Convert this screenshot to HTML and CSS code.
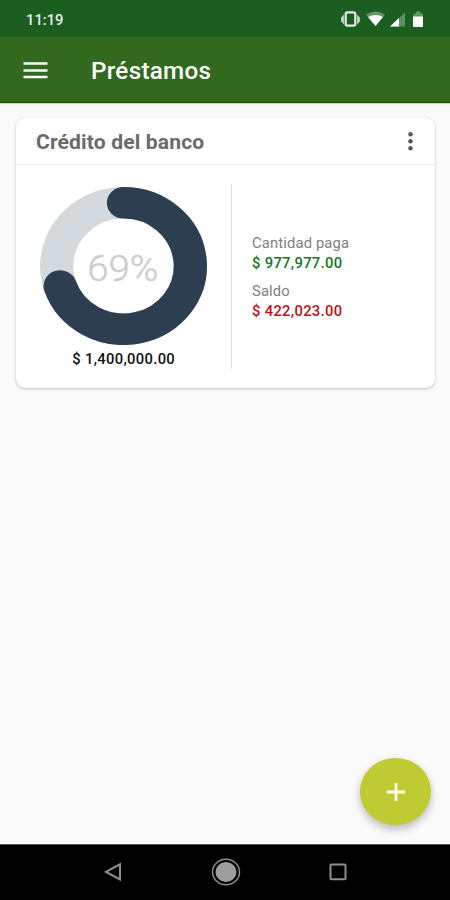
FILE: index.html
```html
<!DOCTYPE html>
<html lang="es">
<head>
<meta charset="utf-8">
<title>Préstamos</title>
<link rel="stylesheet" href="styles.css">
</head>
<body>
<div class="screen">
  <header class="status">
    <span class="clock wide">11:19</span>
    <svg class="status-icons" viewBox="0 0 86 20" width="86" height="20">
      <path d="M4 4.500L1 7.500v4l3 3zM17 4.500L20 7.500v4l-3 3z" fill="#b5cfb5"/>
      <rect x="5.700" y="2.400" width="9.600" height="13.200" rx="1.600" fill="none" stroke="#e4eee4" stroke-width="2.200"/>
      <path d="M26 4.700Q35.500-1.700 45 4.700L35.500 16z" fill="#639665"/>
      <path d="M28 7Q35.500 3 43 7L35.500 16z" fill="#fff"/>
      <path d="M50 16.500L65 2.500v14z" fill="#5b905d"/>
      <path d="M50 16.500L59 8v8.500z" fill="#fff"/>
      <path d="M73.500 7.500V4.500q0-1 1-1h1.500V1.500h4.500v2h1.500q1 0 1 1v3z" fill="#639665"/>
      <path d="M73 6.500h10v9.500q0 1-1 1h-8q-1 0-1-1z" fill="#fff"/>
    </svg>
  </header>
  <nav class="appbar">
    <svg class="burger" viewBox="0 0 25 18" width="25" height="18"><path d="M.5 1.500h24M.5 8.500h24M.5 15h24" stroke="#f8fbf6" stroke-width="2.700"/></svg>
    <h1 class="title wide">Préstamos</h1>
  </nav>
  <main class="content">
    <section class="card">
      <div class="card-head">
        <h2 class="card-title wide">Crédito del banco</h2>
        <svg viewBox="0 0 6 20" width="6" height="20" fill="#555"><circle cx="3.500" cy="3.300" r="2.200"/><circle cx="3.500" cy="10.300" r="2.200"/><circle cx="3.500" cy="17.300" r="2.200"/></svg>
      </div>
      <div class="card-body">
        <div class="chart">
          <svg class="donut" viewBox="0 0 158 158" preserveAspectRatio="none" fill="none" stroke-width="31.500">
            <circle cx="79" cy="79" r="63.200" stroke="#d4d9dd"/>
            <path d="M79 15.800A63.200 63.200 0 1 1 19.070 99.050" stroke="#2c3e50" stroke-linecap="round"/>
          </svg>
          <span class="percent wide">69%</span>
          <span class="total wide">$ 1,400,000.00</span>
        </div>
        <dl class="figures">
          <dt class="wide">Cantidad paga</dt>
          <dd class="paid wide">$ 977,977.00</dd>
          <dt class="wide">Saldo</dt>
          <dd class="due wide">$ 422,023.00</dd>
        </dl>
      </div>
    </section>
    <button class="fab" aria-label="Agregar"><svg viewBox="0 0 18 18" width="18" height="18"><path d="M0 9h18M9 0v18" stroke="#fffff0" stroke-width="2.800"/></svg></button>
  </main>
  <footer class="navbar">
    <svg viewBox="0 0 18 20" width="18" height="20"><path d="M16 2.300v15.200L1.900 9.900z" fill="none" stroke="#8e8e8e" stroke-width="2"/></svg>
    <svg viewBox="0 0 30 28" width="30" height="28"><ellipse cx="15" cy="14" rx="13.500" ry="12.800" fill="none" stroke="#8e8e8e" stroke-width="1.500"/><ellipse cx="15" cy="14" rx="10.500" ry="10" fill="#9e9e9e"/></svg>
    <svg viewBox="0 0 18 18" width="18" height="18"><rect x="1.500" y="1.500" width="15" height="14.800" rx=".8" fill="none" stroke="#8e8e8e" stroke-width="2"/></svg>
  </footer>
</div>
</body>
</html>
```
FILE: styles.css
```css
* { box-sizing: border-box; }
body { margin: 0; font-family: Roboto, "Liberation Sans", sans-serif; }
h1, h2, dl, dd { margin: 0; }
.screen { width: 450px; height: 900px; display: flex; flex-direction: column; background: #fafafa; overflow: hidden; }
.wide { display: block; transform: scaleX(1.055); transform-origin: left center; white-space: nowrap; }
.status { height: 37px; background: #1b5e20; display: flex; justify-content: space-between; padding: 10px 24px 0 26px; }
.clock { color: #e6f0e6; font-size: 14px; font-weight: 500; line-height: 20px; }
.appbar { height: 66px; background: #33691e; border-bottom: 1px solid #1d5a08; display: flex; align-items: center; padding: 2px 0 0 23px; box-shadow: 0 1px 1px #c5d3c0; }
.title { margin: 3px 0 0 43px; color: #fff; font-size: 23px; font-weight: 500; line-height: 30px; letter-spacing: .25px; }
.content { flex: 1; position: relative; padding: 15px 15px 0 16px; }
.card { height: 270px; background: #fff; border-radius: 9px; box-shadow: 0 1px 3px rgba(0,0,0,.22), 0 0 1px rgba(0,0,0,.1); }
.card-head { height: 47px; border-bottom: 1px solid #e8e8e8; display: flex; align-items: center; justify-content: space-between; padding: 0 22px 0 20px; }
.card-title { margin-top: 1px; color: #6b6b6b; font-size: 20px; font-weight: 700; line-height: 28px; letter-spacing: .12px; }
.card-body { display: flex; height: 223px; padding: 19px 0; }
.chart { width: 216px; border-right: 1px solid #e2e2e2; display: grid; justify-items: center; grid-template-rows: 162px 20px; padding-top: 3px; }
.donut { grid-area: 1 / 1; width: 167px; height: 158px; }
.percent { grid-area: 1 / 1; align-self: start; margin: 61px 1px 0 0; color: #ccc; font-size: 36.500px; font-weight: 300; line-height: 42px; transform-origin: center; -webkit-text-stroke: .4px #ccc; }
.total { color: #111; font-size: 14px; font-weight: 500; line-height: 20px; letter-spacing: .3px; transform-origin: center; }
.figures { padding: 50px 0 0 20px; font-size: 14px; line-height: 19px; }
.figures dt { color: #808080; letter-spacing: .14px; }
.figures dd { font-weight: 500; letter-spacing: .3px; padding-top: 1px; margin-bottom: 9px; }
.paid { color: #15771c; }
.due { color: #bd1018; }
.fab { position: absolute; right: 19px; bottom: 19px; width: 71px; height: 67px; border: 0; border-radius: 50%; background: #c0ca33; display: grid; place-items: center; padding: 0; box-shadow: 0 5px 8px rgba(0,0,0,.2), 0 1px 10px rgba(0,0,0,.07); }
.navbar { height: 56px; background: #000; border-top: 1px solid #555; display: flex; align-items: center; justify-content: space-between; padding: 0 103px 1px 104px; }
```
